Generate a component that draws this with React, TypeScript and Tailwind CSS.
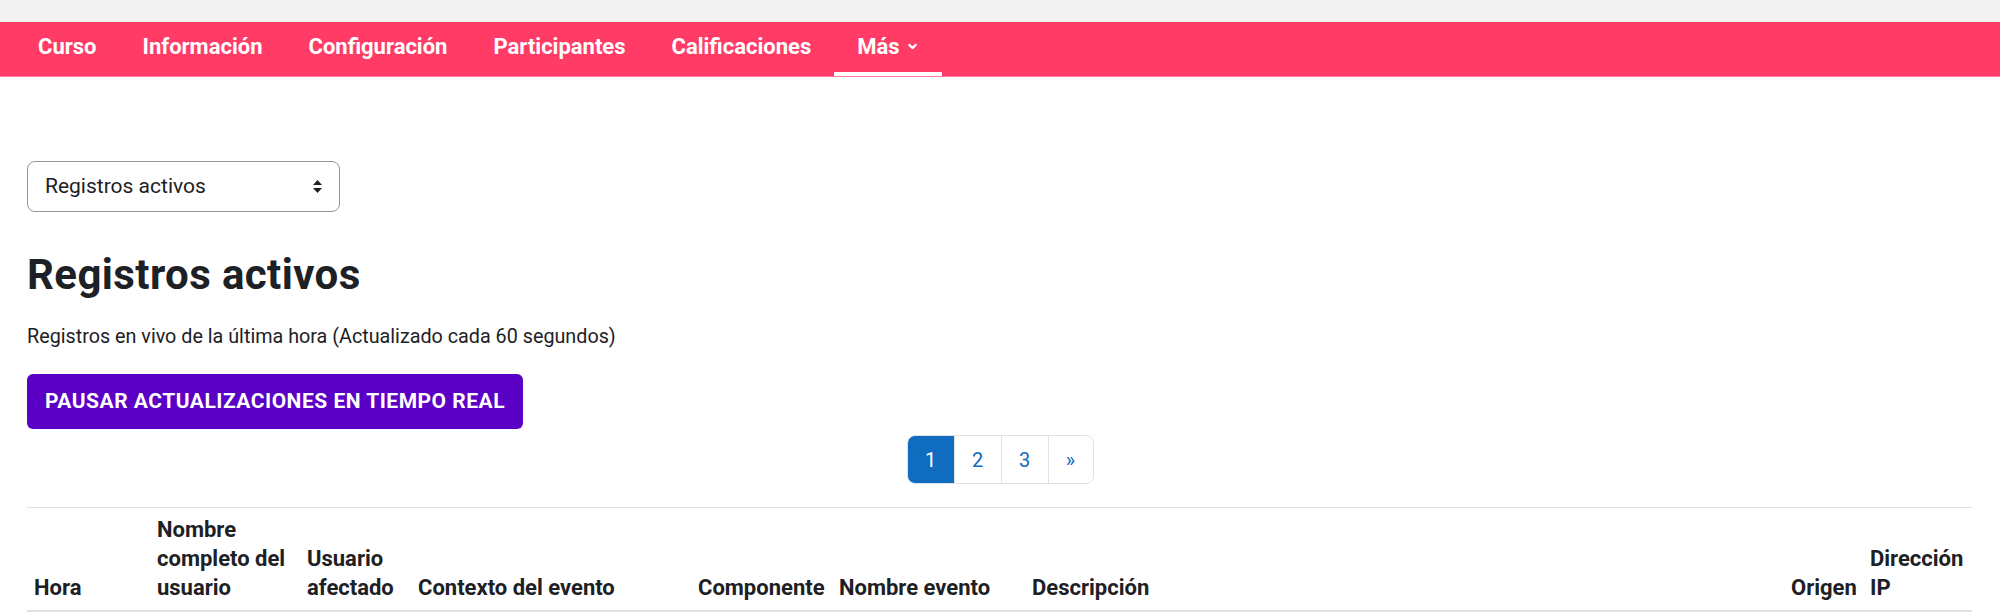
import { ChevronDown } from 'lucide-react';

const navItems = ['Curso', 'Información', 'Configuración', 'Participantes', 'Calificaciones'];

const columns: { label: React.ReactNode; w: string }[] = [
  { label: 'Hora', w: 'w-[123px]' },
  { label: <>Nombre<br />completo del<br />usuario</>, w: 'w-[150px]' },
  { label: <>Usuario<br />afectado</>, w: 'w-[111px]' },
  { label: 'Contexto del evento', w: 'w-[280px]' },
  { label: 'Componente', w: 'w-[141px]' },
  { label: 'Nombre evento', w: 'w-[193px]' },
  { label: 'Descripción', w: 'w-[759px]' },
  { label: 'Origen', w: 'w-[79px]' },
  { label: <>Dirección<br />IP</>, w: 'w-[109px]' },
];

function SortArrows() {
  return (
    <svg width="9" height="13" viewBox="0 0 9 13" className="text-[#1d2125]">
      <path d="M4.5 0 L9 5 H0 Z" fill="currentColor" />
      <path d="M4.5 13 L9 8 H0 Z" fill="currentColor" />
    </svg>
  );
}

export default function App() {
  return (
    <div className="w-[2000px] h-[615px] overflow-hidden bg-white text-[#1d2125] font-['Roboto',sans-serif]">
      <div className="h-[22px] bg-[#f2f2f2]" />

      <nav className="h-[55px] bg-[#ff3b66] flex pl-[15px] border-b border-[#ff7e9b]">
        {navItems.map((item) => (
          <a key={item} className="px-[23px] pb-[5px] flex items-center text-white font-bold text-[22px]">
            {item}
          </a>
        ))}
        <a className="px-[23px] pb-[1px] flex items-center gap-[6px] text-white font-bold text-[22px] border-b-[4px] border-white">
          Más
          <ChevronDown size={13} strokeWidth={4} />
        </a>
      </nav>

      <main className="px-[27px] pt-[84px]">
        <div className="w-[313px] h-[51px] border border-[#8f959e] rounded-[8px] flex items-center justify-between pl-[17px] pr-[17px] text-[21px] text-[#1d2125]">
          <span>Registros activos</span>
          <SortArrows />
        </div>

        <h2 className="mt-[38px] text-[42px] font-bold leading-[1.2] tracking-[0.4px]">Registros activos</h2>

        <p className="mt-[22px] text-[19.75px] leading-[30px]">
          Registros en vivo de la última hora (Actualizado cada 60 segundos)
        </p>

        <button className="mt-[22px] h-[55px] px-[18px] rounded-[6px] bg-[#5b01c6] text-white font-bold text-[21px] tracking-[0.5px] uppercase">
          Pausar actualizaciones en tiempo real
        </button>

        <div className="flex justify-center mt-[6px]">
          <div className="flex h-[49px] border border-[#dee2e6] rounded-[8px] overflow-hidden text-[20px]">
            <span className="w-[46px] flex items-center justify-center bg-[#0f6cbf] text-white">1</span>
            <span className="w-[47px] flex items-center justify-center text-[#0f6cbf] border-l border-[#dee2e6]">2</span>
            <span className="w-[47px] flex items-center justify-center text-[#0f6cbf] border-l border-[#dee2e6]">3</span>
            <span className="w-[45px] flex items-center justify-center text-[#0f6cbf] border-l border-[#dee2e6]">»</span>
          </div>
        </div>

        <table className="mt-[23px] w-[1945px] table-fixed border-collapse">
          <thead>
            <tr className="border-t border-[#dee2e6] border-b-2 border-b-[#dee2e6]">
              {columns.map((c, i) => (
                <th
                  key={i}
                  className={`${c.w} align-bottom text-left font-bold text-[22px] leading-[29px] px-[7px] pt-[7px] pb-[8px]`}
                >
                  {c.label}
                </th>
              ))}
            </tr>
          </thead>
        </table>
      </main>
    </div>
  );
}
